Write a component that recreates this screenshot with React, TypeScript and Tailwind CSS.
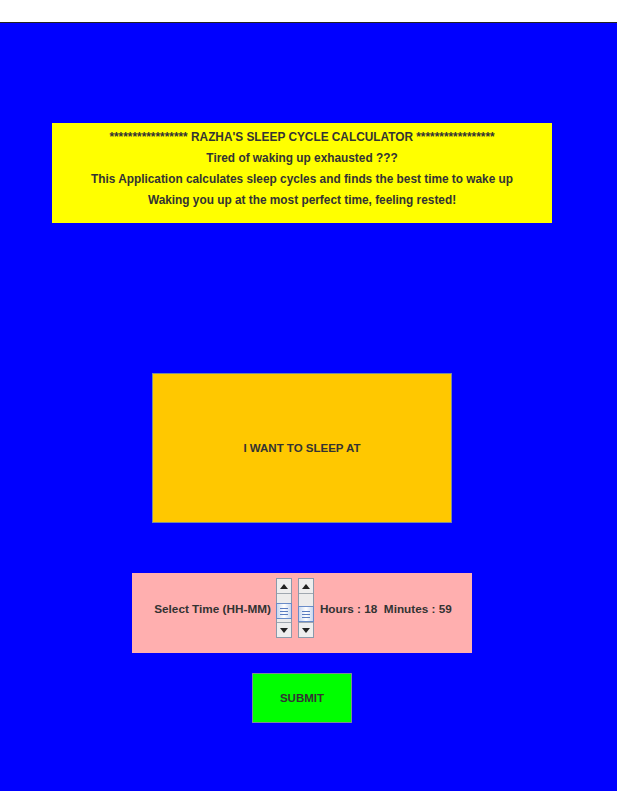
import React from "react";

const font = { fontFamily: '"Liberation Sans", Arial, sans-serif' };

function ScrollBar({ thumbTop }: { thumbTop: number }) {
  return (
    <div className="relative flex h-[60px] w-[16px] flex-col border border-[#8a9aab] bg-[#eeeeee]">
      <div className="flex h-[15px] items-center justify-center border-b border-[#a0a8b0] bg-[#eeeeee]">
        <svg width="8" height="5" viewBox="0 0 8 5"><path d="M0 5 L4 0 L8 5 Z" fill="#222" /></svg>
      </div>
      <div className="flex-1 bg-[#ececec]" />
      <div className="flex h-[15px] items-center justify-center border-t border-[#a0a8b0] bg-[#eeeeee]">
        <svg width="8" height="5" viewBox="0 0 8 5"><path d="M0 0 L4 5 L8 0 Z" fill="#222" /></svg>
      </div>
      <div
        className="absolute left-[-1px] flex h-[16px] w-[16px] flex-col items-center justify-center gap-[2px] border border-[#6a8cc8] bg-gradient-to-r from-[#c8d8f0] via-[#ffffff] to-[#c8d8f0]"
        style={{ top: thumbTop }}
      >
        <div className="h-px w-[8px] bg-[#5a7cc0]" />
        <div className="h-px w-[8px] bg-[#5a7cc0]" />
        <div className="h-px w-[8px] bg-[#5a7cc0]" />
      </div>
    </div>
  );
}

export default function App() {
  return (
    <div className="flex min-h-[791px] w-[617px] flex-col bg-white text-[#333333]" style={font}>
      <div className="h-[23px] border-b border-[#222] bg-white" />
      <div className="flex flex-1 flex-col bg-[#0000ff]">
        <div className="ml-[52px] mt-[100px] flex h-[100px] w-[500px] flex-col items-center bg-[#ffff00] pt-[4px] text-[11.85px] font-bold leading-[21px]">
          <div>***************** RAZHA'S SLEEP CYCLE CALCULATOR *****************</div>
          <div>Tired of waking up exhausted ???</div>
          <div>This Application calculates sleep cycles and finds the best time to wake up</div>
          <div>Waking you up at the most perfect time, feeling rested!</div>
        </div>
        <div className="ml-[152px] mt-[150px] flex h-[150px] w-[300px] items-center justify-center border border-[#7a8a99] bg-[#ffc800] pt-[2px] text-[11.5px] font-bold">
          I WANT TO SLEEP AT
        </div>
        <div className="ml-[132px] mt-[50px] flex h-[80px] w-[340px] items-start justify-center bg-[#ffafaf] pt-[5px] text-[11.75px] font-bold">
          <div className="ml-[2px] flex items-center gap-[5px]">
            <span className="pt-[1px]">Select Time (HH-MM)</span>
            <ScrollBar thumbTop={24} />
            <div className="ml-[1px]">
              <ScrollBar thumbTop={27} />
            </div>
            <span className="ml-[1px] pt-[1px]">Hours : 18&nbsp; Minutes : 59</span>
          </div>
        </div>
        <div className="ml-[252px] mt-[20px] flex h-[50px] w-[100px] items-center justify-center border border-[#7a8a99] bg-[#00ff00] pt-[1px] text-[11.5px] font-bold">
          SUBMIT
        </div>
      </div>
    </div>
  );
}
